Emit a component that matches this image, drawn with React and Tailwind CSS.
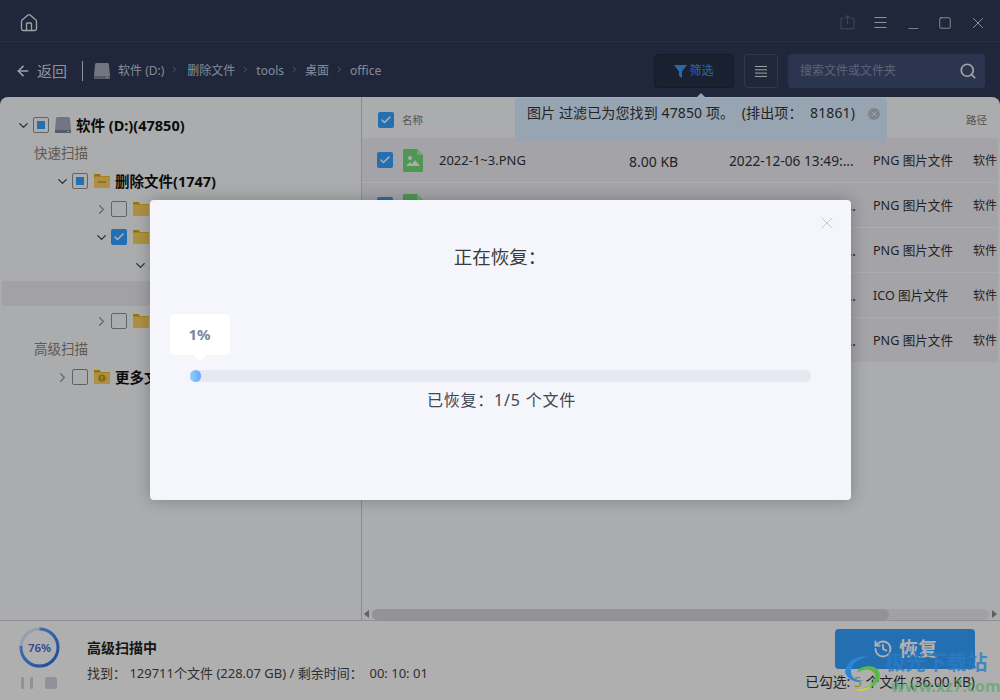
import React from "react";
import { Home, ArrowLeft, ChevronDown, ChevronRight, Check, X, Menu, Search, Minus, Square, History } from "lucide-react";

const font = "font-['Noto_Sans','Noto_Sans_CJK_SC',sans-serif]";

function Box({ state }) {
  if (state === "checked")
    return (
      <span className="flex h-4 w-4 shrink-0 items-center justify-center rounded-[2px] bg-[#339fff]">
        <Check size={12} strokeWidth={3} className="text-white" />
      </span>
    );
  return (
    <span className="flex h-4 w-4 shrink-0 items-center justify-center rounded-[2px] border border-[#8f8f8f] bg-[#f5f6fa]">
      {state === "partial" && <span className="h-2 w-2 bg-[#339fff]" />}
    </span>
  );
}

function Drive() {
  return (
    <svg width="16" height="16" viewBox="0 0 16 16" className="shrink-0">
      <path d="M2.5 0h11A1.5 1.5 0 0 1 15 1.5L16 13v3H0v-3L1 1.5A1.5 1.5 0 0 1 2.5 0z" fill="#a2a9b8" />
      <path d="M0 13h16v1.5A1.5 1.5 0 0 1 14.5 16h-13A1.5 1.5 0 0 1 0 14.5z" fill="#7a8294" />
      <rect x="12" y="14" width="2" height="1" fill="#d0d4dc" />
    </svg>
  );
}

function Folder({ mark }) {
  return (
    <svg width="16" height="14" viewBox="0 0 16 14" className="shrink-0">
      <path d="M0 1.2C0 .5.5 0 1.2 0h4.3l1.6 2H16v2H0z" fill="#d9a400" />
      <rect y="2.5" width="16" height="11.5" rx="0.8" fill="#f8cf60" />
      {mark === "minus" && <rect x="4" y="7.2" width="8" height="1.6" fill="#c89a20" />}
      {mark === "info" && (
        <g>
          <circle cx="8" cy="8.2" r="3.6" fill="#c8921a" />
          <rect x="7.3" y="6" width="1.4" height="2.8" fill="#f8cf60" />
          <rect x="7.3" y="9.3" width="1.4" height="1.3" fill="#f8cf60" />
        </g>
      )}
    </svg>
  );
}

function TreeRow({ indent, open, box, folder, mark, label }) {
  return (
    <div className="flex h-7 items-center" style={{ paddingLeft: indent }}>
      {open ? (
        <ChevronDown size={15} strokeWidth={2.2} className="w-[15px] shrink-0 text-[#3c4860]" />
      ) : (
        <ChevronRight size={15} strokeWidth={2.2} className="w-[15px] shrink-0 text-[#9a9a9a]" />
      )}
      <span className="ml-[2px] flex items-center">
        <Box state={box} />
      </span>
      {folder && (
        <span className="ml-[6px]">
          <Folder mark={mark} />
        </span>
      )}
      {label && <span className="ml-[5px] whitespace-nowrap pt-[1px] text-[14.5px] font-bold text-[#111]">{label}</span>}
    </div>
  );
}

function FileIcon() {
  return (
    <svg width="20" height="23" viewBox="0 0 20 23" className="shrink-0">
      <path d="M1 0h13l6 6v16a1 1 0 0 1-1 1H1a1 1 0 0 1-1-1V1a1 1 0 0 1 1-1z" fill="#72d978" />
      <path d="M14 0l6 6h-5a1 1 0 0 1-1-1z" fill="#a6e8aa" />
      <circle cx="7" cy="9" r="2" fill="#f5f6fa" />
      <path d="M3 17l4-4 2 2 3-4 5 6z" fill="#f5f6fa" />
    </svg>
  );
}

const files = [
  { name: "2022-1~3.PNG", size: "8.00 KB", date: "2022-12-06 13:49:...", type: "PNG 图片文件" },
  { date: "...", type: "PNG 图片文件" },
  { date: "...", type: "PNG 图片文件" },
  { date: "...", type: "ICO 图片文件" },
  { date: "...", type: "PNG 图片文件" },
];

function Crumb({ children, first }) {
  return (
    <span className="flex items-center">
      {!first && <ChevronRight size={9} strokeWidth={2} className="mx-[6px] mb-[4px] text-[#8e97ab]" />}
      <span className="text-[12px] text-[#bcc8dc]">{children}</span>
    </span>
  );
}

export default function App() {
  return (
    <div className={`relative flex h-[700px] w-[1000px] flex-col overflow-hidden bg-[#2e3853] ${font}`}>
      {/* title bar */}
      <div className="flex h-[42px] shrink-0 items-center justify-between border-b border-[#384360] pl-[19px] pr-[13px] pt-[4px]">
        <Home size={20} strokeWidth={1.6} className="text-[#e6e8ee]" />
        <div className="flex items-center gap-[17px]">
          <svg width="15" height="15" viewBox="0 0 15 15" fill="none" stroke="#566078" strokeWidth="1.2">
            <path d="M4 3.5H1v10.2h13V3.5h-3M7.5 9V1M5 3.2 7.5.8 10 3.2" />
          </svg>
          <Menu size={17} strokeWidth={1.3} className="text-[#dfe2ea]" />
          <Minus size={15} strokeWidth={1.2} className="mt-[12px] text-[#dfe2ea]" />
          <Square size={14} strokeWidth={1.4} className="text-[#dfe2ea]" />
          <X size={18} strokeWidth={1.2} className="text-[#dfe2ea]" />
        </div>
      </div>

      {/* toolbar */}
      <div className="flex h-[55px] shrink-0 items-center pl-[15px] pr-[15px] pt-[3px]">
        <ArrowLeft size={16} strokeWidth={2.4} className="text-[#e6e8ee]" />
        <span className="ml-[6px] text-[15px] text-[#cfd3dc]">返回</span>
        <span className="ml-[15px] h-5 w-px bg-[#cfd3dc]" />
        <span className="ml-[11px] mr-[8px]">
          <Drive />
        </span>
        <Crumb first>软件 (D:)</Crumb>
        <Crumb>
          <span className="ml-[2px]">删除文件</span>
        </Crumb>
        <Crumb>tools</Crumb>
        <Crumb>桌面</Crumb>
        <Crumb>office</Crumb>
        <div className="ml-auto flex items-center gap-[10px]">
          <div className="flex h-[34px] w-20 items-center justify-center gap-[2px] rounded-[4px] border border-[#1f2740] bg-[#252e45]">
            <svg width="13" height="13" viewBox="0 0 13 13">
              <path d="M0 0h13L8 6.5V13L5 11V6.5z" fill="#3b96ef" />
            </svg>
            <span className="text-[12px] text-[#3b96ef]">筛选</span>
          </div>
          <div className="flex h-[34px] w-[34px] items-center justify-center rounded-[4px] border border-[#46526f]">
            <svg width="12" height="11" viewBox="0 0 12 11" stroke="#e8eaf0" strokeWidth="1">
              <path d="M0 .5h12M0 3.8h12M0 7.1h12M0 10.4h12" />
            </svg>
          </div>
          <div className="flex h-[34px] w-[197px] items-center justify-between rounded-[4px] bg-[#3f4c72] pl-3 pr-2">
            <span className="text-[12px] text-[#8590a8]">搜索文件或文件夹</span>
            <Search size={18} strokeWidth={2.2} className="text-[#eceef3]" />
          </div>
        </div>
      </div>

      {/* main */}
      <div className="flex min-h-0 flex-1 flex-col overflow-hidden rounded-t-[8px] bg-[#f5f6fa]">
        <div className="flex min-h-0 flex-1">
          {/* tree */}
          <div className="w-[362px] shrink-0 border-r border-[#c8c9ce] pt-[14px]">
            <div className="flex h-7 items-center pl-[16px]">
              <ChevronDown size={15} strokeWidth={2.2} className="text-[#3c4860]" />
              <span className="ml-[2px]">
                <Box state="partial" />
              </span>
              <span className="ml-[6px]">
                <Drive />
              </span>
              <span className="ml-[5px] pt-[1px] text-[14.5px] font-bold text-[#111]">软件 (D:)(47850)</span>
            </div>
            <div className="flex h-7 items-center pl-[34px] text-[13.5px] text-[#8a8178]">快速扫描</div>
            <TreeRow indent={55} open box="partial" folder mark="minus" label="删除文件(1747)" />
            <TreeRow indent={94} box="empty" folder />
            <TreeRow indent={94} open box="checked" folder />
            <div className="flex h-7 items-center pl-[133px]">
              <ChevronDown size={15} strokeWidth={2.2} className="text-[#3c4860]" />
            </div>
            <div className="flex h-7 items-center">
              <div className="ml-[2px] h-[25px] w-[358px] rounded-[2px] bg-[#e7e7ee]" />
            </div>
            <TreeRow indent={94} box="empty" folder />
            <div className="flex h-7 items-center pl-[34px] text-[13.5px] text-[#8a8178]">高级扫描</div>
            <TreeRow indent={55} box="empty" folder mark="info" label="更多文" />
          </div>

          {/* list */}
          <div className="flex min-w-0 flex-1 flex-col">
            <div className="flex h-[41px] shrink-0 items-center pl-4 pr-[13px] pt-[5px]">
              <Box state="checked" />
              <span className="ml-2 pt-[1px] text-[10.5px] text-[#777]">名称</span>
              <span className="ml-auto pt-[1px] text-[10.5px] text-[#777]">路径</span>
            </div>
            <div className="mr-[2px] flex flex-col">
              {files.map((f, i) => (
                <div
                  key={i}
                  className="flex h-[45px] items-center border-b border-[#f5f6fa] bg-[#eaeaf1] pl-[15px] text-[#333]"
                >
                  <Box state="checked" />
                  <span className="ml-[10px]">
                    <FileIcon />
                  </span>
                  <span className="ml-4 w-[190px] shrink-0 pt-[2px] text-[13px]">{f.name}</span>
                  <span className="w-[100px] shrink-0 pt-[2px] text-[14px]">{f.size}</span>
                  <span className={`w-[144px] shrink-0 whitespace-nowrap pt-[2px] text-[13.7px] ${f.name ? "" : "pr-[17px] text-right"}`}>
                    {f.date}
                  </span>
                  <span className="w-[100px] shrink-0 pt-[2px] text-[12.6px]">{f.type}</span>
                  <span className="whitespace-nowrap pt-[2px] text-[12px]">软件</span>
                </div>
              ))}
            </div>
            <div className="mt-auto flex h-3 shrink-0 items-center">
              <span className="ml-[2px] h-0 w-0 border-y-[4px] border-r-[5px] border-y-transparent border-r-[#8a8a8a]" />
              <div className="ml-[3px] flex h-[11px] flex-1 rounded-full bg-[#e9e9ec]">
                <div className="h-full w-[517px] rounded-full bg-[#d3d3d6]" />
              </div>
              <span className="ml-[3px] mr-[3px] h-0 w-0 border-y-[4px] border-l-[5px] border-y-transparent border-l-[#8a8a8a]" />
            </div>
          </div>
        </div>

        {/* footer */}
        <div className="flex h-20 shrink-0 border-t border-[#d0d0d4] bg-[#fbfbfb]">
          <div className="flex w-[87px] shrink-0 flex-col pl-[19px] pt-[6px]">
            <div className="relative h-[41px] w-[41px]">
              <svg width="41" height="41" viewBox="0 0 41 41">
                <defs>
                  <linearGradient id="ring" x1="1" y1="0" x2="0" y2="1">
                    <stop offset="0" stopColor="#6cb0ff" />
                    <stop offset="1" stopColor="#3166e0" />
                  </linearGradient>
                </defs>
                <circle cx="20.5" cy="20.5" r="18.5" fill="none" stroke="#d4e4f7" strokeWidth="3" />
                <circle
                  cx="20.5"
                  cy="20.5"
                  r="18.5"
                  fill="none"
                  stroke="url(#ring)"
                  strokeWidth="3"
                  strokeDasharray="88.3 116.2"
                  transform="rotate(-90 20.5 20.5)"
                />
              </svg>
              <span className="absolute inset-0 flex items-center justify-center text-[11.5px] font-semibold text-[#4a64c8]">
                76%
              </span>
            </div>
            <div className="ml-[2px] mt-[9px] flex items-center">
              <span className="h-3 w-[3px] rounded-[1px] bg-[#cdd2de]" />
              <span className="ml-[6px] h-3 w-[3px] rounded-[1px] bg-[#cdd2de]" />
              <span className="ml-[12px] h-3 w-3 rounded-[2px] bg-[#cdd2de]" />
            </div>
          </div>
          <div className="flex flex-col pt-[16px]">
            <span className="text-[14px] leading-[22px] font-bold text-[#222]">高级扫描中</span>
            <span className="mt-[4px] text-[13px] leading-[20px] whitespace-pre text-[#444]">
              找到： 129711个文件 (228.07 GB) / 剩余时间：  00: 10: 01
            </span>
          </div>
          <div className="ml-auto flex flex-col items-end pr-[25px] pt-[8px]">
            <div className="flex h-10 w-[140px] items-center justify-center gap-[6px] rounded-[4px] bg-[#339fff]">
              <History size={20} strokeWidth={2.2} className="text-white" />
              <span className="text-[19px] font-bold text-white">恢复</span>
            </div>
            <span className="mt-[3px] text-[13.8px] whitespace-pre text-[#333]">
              已勾选: <span className="text-[#c8c820]">5</span> 个文件 (36.00 KB)
            </span>
          </div>
        </div>
      </div>

      {/* filter notice */}
      <div className="absolute left-[515px] top-[98px] flex h-11 w-[372px] items-start justify-between rounded-[4px] bg-[#d8ecff] pl-3 pr-[7px] pt-[5px]">
        <span className="text-[14px] leading-5 tracking-[0.12px] whitespace-pre text-[#333]">图片 过滤已为您找到 47850 项。  (排出项：  81861)</span>
        <span className="mt-[5px] flex h-3 w-3 items-center justify-center rounded-full bg-[#b5bfcb]">
          <X size={8} strokeWidth={3} className="text-[#e4ebf3]" />
        </span>
      </div>
      <span className="absolute left-[696px] top-[93px] h-0 w-0 border-x-[5px] border-b-[5px] border-x-transparent border-b-[#d8ecff]" />

      {/* dim layer */}
      <div className="absolute inset-0 flex items-center justify-center bg-black/30">
        {/* modal */}
        <div className="relative flex h-[300px] w-[701px] flex-col items-center rounded-[4px] bg-[#f5f6fb] shadow-[0_0_16px_rgba(0,0,0,0.25)]">
          <X size={20} strokeWidth={0.9} className="absolute right-[14px] top-[13px] text-[#b0b5c4]" />
          <div className="mt-[43px] text-[18.5px] leading-7 text-[#3a3a3a]">正在恢复：</div>
          <div className="relative mt-[99px] h-3 w-[621px] rounded-full bg-[#e6e7f0]">
            <div className="h-3 w-[11px] rounded-full bg-gradient-to-r from-[#9acbff] to-[#64a8f8]" />
            <div className="absolute -top-14 -left-5 flex h-[41px] w-[60px] items-center justify-center rounded-[4px] bg-white text-[15px] font-bold text-[#7a879d]">
              1%
              <span className="absolute -bottom-[6px] left-[24px] h-0 w-0 border-x-[6px] border-t-[6px] border-x-transparent border-t-white" />
            </div>
          </div>
          <div className="ml-[3px] mt-[6px] text-[16px] leading-6 tracking-[0.8px] whitespace-pre text-[#3f4654]">已恢复：1/5 个文件</div>
        </div>

        {/* watermark */}
        <div className="absolute left-[843px] top-[650px] flex h-[46px] w-[150px] items-start">
          <svg width="40" height="40" viewBox="0 0 40 40" className="mt-[2px] shrink-0" fill="none">
            <path d="M2 20C4 9 14 3 26 5 15 6 8 12 8 19c0 7 6 11 13 9-6 4-16 1-19-8z" fill="#2a86d8" />
            <path d="M14 20c2-5 10-7 17-5 5 2 7 7 5 12-2 6-9 10-17 10 7-3 13-7 13-13 0-5-6-7-11-6-3 1-5 2-7 2z" fill="#5ab84a" />
            <path d="M12 38c8 0 14-3 18-7-3 5-8 8-14 8z" fill="#e2d22a" />
          </svg>
          <div className="ml-[2px] flex flex-col leading-none">
            <span className="text-[20.5px] font-bold leading-[24px] whitespace-nowrap text-[#2a7cc4]/80">极光下载站</span>
            <span className="ml-[6px] mt-[3px] text-[16px] leading-[18px] font-bold whitespace-nowrap text-[#4aa85a]/60">www.xz7.com</span>
          </div>
        </div>
      </div>
    </div>
  );
}
